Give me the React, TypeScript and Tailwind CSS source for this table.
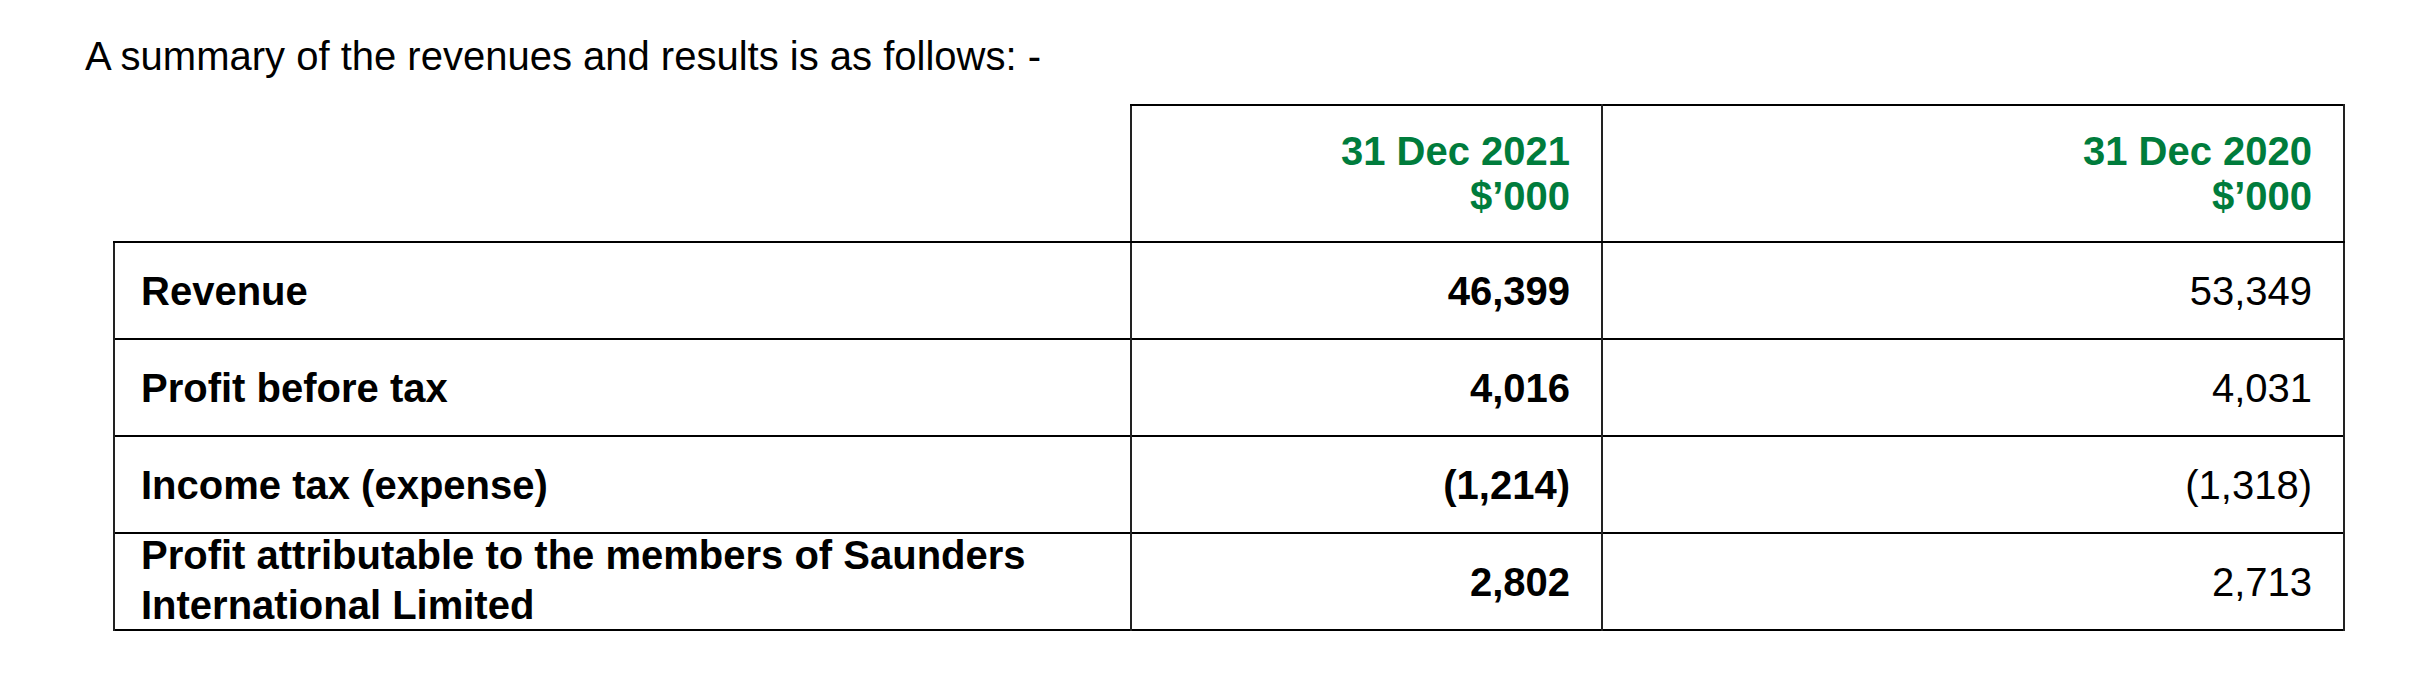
const rows = [
  { label: 'Revenue', current: '46,399', prior: '53,349' },
  { label: 'Profit before tax', current: '4,016', prior: '4,031' },
  { label: 'Income tax (expense)', current: '(1,214)', prior: '(1,318)' },
  {
    label: 'Profit attributable to the members of Saunders International Limited',
    current: '2,802',
    prior: '2,713',
    wraps: true,
  },
];

export default function App() {
  return (
    <div className="min-h-[698px] bg-white font-['Liberation_Sans',Arial,sans-serif] text-black">
      <p className="ml-[85px] pt-[33px] text-[40px] leading-[46px]">
        A summary of the revenues and results is as follows: -
      </p>

      <table className="mt-[25px] ml-[113px] w-[2230px] table-fixed border-collapse">
        <colgroup>
          <col className="w-[1017px]" />
          <col className="w-[471px]" />
          <col className="w-[742px]" />
        </colgroup>
        <thead>
          <tr>
            <th className="h-[137px] border-b-2 border-black"></th>
            {['31 Dec 2021', '31 Dec 2020'].map((date) => (
              <th
                key={date}
                className="h-[137px] border-x-2 border-t-2 border-b-2 border-x-[#222] border-t-black border-b-black pr-[31px] text-right align-middle text-[40px] font-bold leading-[45px] text-[#007c3c]"
              >
                {date}
                <br />
                $’000
              </th>
            ))}
          </tr>
        </thead>
        <tbody>
          {rows.map((row) => (
            <tr key={row.label} className="border-b-2 border-black">
              <td className="h-[97px] border-x-2 border-x-[#222] pl-[26px] pr-[40px] align-middle text-[40px] font-bold leading-[50px]">
                {/* two-line label is squeezed a bit so the row keeps its height */}
                <div className={row.wraps ? '-mt-[6px] -mb-[2px]' : ''}>{row.label}</div>
              </td>
              <td className="h-[97px] border-x-2 border-x-[#222] pr-[31px] text-right align-middle text-[40px] font-bold leading-[50px]">
                {row.current}
              </td>
              <td className="h-[97px] border-x-2 border-x-[#222] pr-[31px] text-right align-middle text-[40px] leading-[50px]">
                {row.prior}
              </td>
            </tr>
          ))}
        </tbody>
      </table>
    </div>
  );
}
